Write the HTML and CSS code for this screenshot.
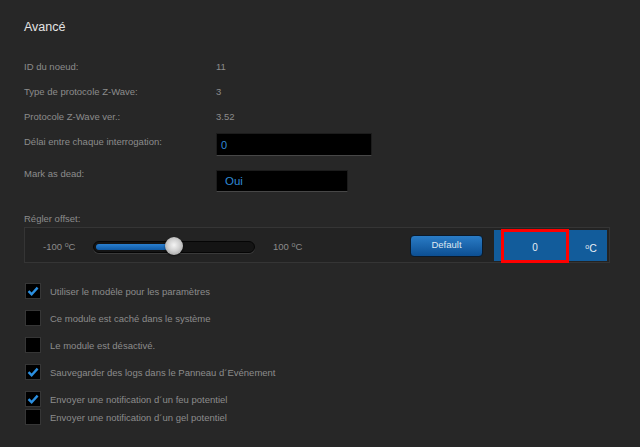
FILE: index.html
```html
<!DOCTYPE html>
<html lang="fr">
<head>
    <meta charset="UTF-8">
    <title>Avancé</title>
    <link rel="stylesheet" href="styles.css">
</head>
<body>
    <div class="advanced">
        <h2 class="title">Avancé</h2>

        <div class="info-row"><span>ID du noeud:</span><span>11</span></div>
        <div class="info-row"><span>Type de protocole Z-Wave:</span><span>3</span></div>
        <div class="info-row"><span>Protocole Z-Wave ver.:</span><span>3.52</span></div>

        <div class="field-row poll">
            <label>Délai entre chaque interrogation:</label>
            <div class="text-box wide">0</div>
        </div>
        <div class="field-row dead">
            <label>Mark as dead:</label>
            <div class="text-box short">Oui</div>
        </div>

        <div class="offset-label">Régler offset:</div>
        <div class="offset-panel">
            <span class="range-min">-100 <sup>o</sup>C</span>
            <div class="slider">
                <div class="slider-fill"></div>
                <div class="slider-knob"></div>
            </div>
            <span class="range-max">100 <sup>o</sup>C</span>
            <button class="default-btn">Default</button>
            <div class="offset-value">
                <div class="value-box">0</div>
                <div class="unit"><span><sup>o</sup>C</span></div>
            </div>
        </div>

        <ul class="options">
            <li class="checked"><span class="box"><svg viewBox="0 0 16 16" width="16" height="16"><path d="M3.5 8.2 L6.6 11.2 L12.6 4.6" fill="none" stroke="#2b8fe0" stroke-width="2.4"/></svg></span>Utiliser le modèle pour les paramètres</li>
            <li><span class="box"></span>Ce module est caché dans le système</li>
            <li><span class="box"></span>Le module est désactivé.</li>
            <li class="checked"><span class="box"><svg viewBox="0 0 16 16" width="16" height="16"><path d="M3.5 8.2 L6.6 11.2 L12.6 4.6" fill="none" stroke="#2b8fe0" stroke-width="2.4"/></svg></span>Sauvegarder des logs dans le Panneau d´Evénement</li>
            <li class="tight checked"><span class="box"><svg viewBox="0 0 16 16" width="16" height="16"><path d="M3.5 8.2 L6.6 11.2 L12.6 4.6" fill="none" stroke="#2b8fe0" stroke-width="2.4"/></svg></span>Envoyer une notification d´un feu potentiel</li>
            <li><span class="box"></span>Envoyer une notification d´un gel potentiel</li>
        </ul>
    </div>
</body>
</html>
```

FILE: styles.css
```css
html, body {
    margin: 0;
    height: 100%;
}

body {
    background: #272727;
    font-family: "Liberation Sans", Arial, sans-serif;
    color: #8c8c8c;
    font-size: 9.5px;
    overflow: hidden;
}

.advanced {
    padding: 19px 30px 0 24px;
}

.title {
    margin: 0 0 19px;
    font-size: 12.5px;
    line-height: 16px;
    font-weight: normal;
    color: #e4e4e4;
}

/* info rows */
.info-row {
    display: grid;
    grid-template-columns: 192px 1fr;
    height: 25px;
    line-height: 25px;
}

.field-row {
    display: grid;
    grid-template-columns: 192px auto 1fr;
    align-items: start;
}

.field-row label {
    line-height: 14px;
}

.poll {
    margin-top: 4px;
}

.poll label {
    padding-top: 2px;
}

.dead {
    margin-top: 11px;
}

.dead .text-box {
    margin-top: 3px;
}

.text-box {
    box-sizing: border-box;
    background: #000;
    border: 1px solid #1c1c1c;
    border-bottom-color: #474747;
    color: #2f8ad6;
    font-size: 11px;
    padding-left: 4px;
}

.text-box.wide {
    width: 156px;
    height: 23px;
    line-height: 22px;
}

.text-box.short {
    width: 132px;
    height: 22px;
    line-height: 21px;
    padding-left: 8px;
    font-size: 11.5px;
}

/* offset */
.offset-label {
    margin-top: 20px;
    line-height: 14px;
}

.offset-panel {
    display: flex;
    align-items: center;
    margin-top: 1px;
    height: 36px;
    box-sizing: border-box;
    background: #232323;
    border: 1px solid #353535;
    padding: 2px 2px 1px 18px;
}

sup {
    font-size: 7px;
    vertical-align: 3px;
    line-height: 0;
}

.range-min {
    width: 50px;
    padding-top: 2px;
}

.range-max {
    margin-left: 18px;
    padding-top: 2px;
}

.slider {
    position: relative;
    width: 162px;
    height: 12px;
    box-sizing: border-box;
    background: #141414;
    border: 1px solid #050505;
    border-radius: 6px;
    box-shadow: 0 1px 0 #3a3a3a;
    margin-top: 2px;
}

.slider-fill {
    margin: 2px 0 0 2px;
    width: 78px;
    height: 6px;
    border-radius: 3px;
    background: linear-gradient(#2a7fd0, #0f5aa6);
}

.slider-knob {
    position: absolute;
    left: 71px;
    top: -5px;
    width: 18px;
    height: 18px;
    border-radius: 50%;
    background: radial-gradient(circle at 50% 45%, #f4f4f4 0, #cfcfcf 45%, #8c8c8c 100%);
    box-shadow: 0 1px 2px rgba(0, 0, 0, 0.6);
}

.default-btn {
    margin-left: auto;
    width: 73px;
    height: 22px;
    border: 1px solid #0b1a2a;
    border-radius: 4px;
    background: linear-gradient(#2a7cc6, #0c4f93);
    color: #dfe8f2;
    font-family: "Liberation Sans", Arial, sans-serif;
    font-size: 9.5px;
    padding: 0 0 3px;
}

.offset-value {
    display: flex;
    align-self: stretch;
    margin-left: 11px;
    width: 113px;
    background: #125c9b;
    color: #e8eef5;
    font-size: 10px;
}

.value-box {
    box-sizing: border-box;
    width: 68px;
    margin: -1px 0 -2px 7px;
    border: 3px solid #f00;
    display: flex;
    align-items: center;
    justify-content: center;
    padding-top: 2px;
}

.unit {
    flex: 1;
    display: flex;
    align-items: center;
    justify-content: center;
    padding: 4px 0 0 6px;
    font-size: 10.5px;
}

/* checkbox options */
.options {
    list-style: none;
    margin: 20px 0 0;
    padding: 0 0 0 1px;
}

.options li {
    display: flex;
    align-items: center;
    height: 16px;
    margin-bottom: 11px;
}

.options li.tight {
    margin-bottom: 2px;
}

.box {
    width: 16px;
    height: 16px;
    box-sizing: border-box;
    background: #000;
    border: 1px solid #363636;
    margin-right: 9px;
    flex-shrink: 0;
}

.box svg {
    display: block;
    margin: -1px;
}
```
